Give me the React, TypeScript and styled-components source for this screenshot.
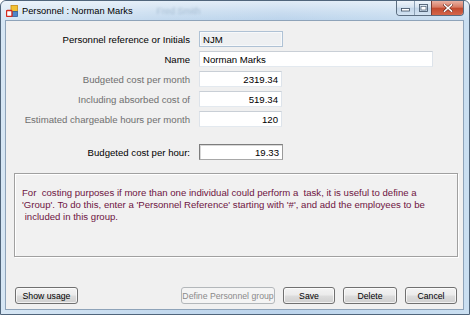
import React from "react";
import styled, { createGlobalStyle } from "styled-components";

const GlobalStyle = createGlobalStyle`
  html, body { margin: 0; padding: 0; background: #ffffff; }
  * { box-sizing: border-box; }
`;

const Window = styled.div`
  width: 470px;
  height: 315px;
  border: 1px solid #50657b;
  border-radius: 6px 6px 0 0;
  background: linear-gradient(to right, #d6e6f4 0%, #c3d9ee 35%, #bcd4ec 60%, #cadff1 100%);
  display: flex;
  flex-direction: column;
  overflow: hidden;
  font-family: "Liberation Sans", Arial, sans-serif;
`;

const TitleBar = styled.div`
  height: 19px;
  display: flex;
  align-items: center;
  padding-left: 5px;
  gap: 4px;
  background: linear-gradient(to bottom, rgba(255,255,255,0.55) 0%, rgba(255,255,255,0.2) 60%, rgba(255,255,255,0) 100%);
`;

const Title = styled.span`
  font-size: 9.3px;
  color: #000;
  white-space: nowrap;
`;

const Ghost = styled.span`
  font-size: 9px;
  color: #4d6f8f;
  opacity: 0.3;
  filter: blur(1px);
  margin-left: 20px;
  white-space: nowrap;
`;

const CaptionGroup = styled.div`
  margin-left: auto;
  margin-right: 5px;
  align-self: flex-start;
  display: flex;
  height: 15px;
  border: 1px solid #5b6d80;
  border-top: none;
  border-radius: 0 0 4px 4px;
  overflow: hidden;
`;

const CaptionButton = styled.div<{ $close?: boolean }>`
  width: ${(p) => (p.$close ? 32 : 17)}px;
  height: 100%;
  display: flex;
  align-items: center;
  justify-content: center;
  border-left: ${(p) => (p.$close ? "1px solid #7a3c33" : "1px solid #8ea2b6")};
  &:first-child { border-left: none; }
  background: ${(p) =>
    p.$close
      ? "linear-gradient(to bottom, #eab2a4 0%, #d77a63 45%, #c24a2f 50%, #d4664a 100%)"
      : "linear-gradient(to bottom, #eef4fa 0%, #d5e3f0 45%, #c2d5e8 50%, #d3e3f2 100%)"};
`;

const ClientFrame = styled.div`
  flex: 1;
  margin: 0 5px 4px 4px;
  border: 1px solid #8ea3b9;
  background: #f0f0f0;
  display: flex;
  flex-direction: column;
`;

const Form = styled.div`
  display: grid;
  grid-template-columns: 184px 1fr;
  column-gap: 9px;
  row-gap: 4px;
  padding-top: 10px;
`;

const RowGap = styled.div`
  grid-column: 1 / -1;
  height: 9px;
`;

const Label = styled.div<{ $muted?: boolean }>`
  font-size: 9.6px;
  color: ${(p) => (p.$muted ? "#6f6f6f" : "#000")};
  text-align: right;
  align-self: center;
  white-space: nowrap;
`;

const Field = styled.div<{ $width: number; $variant?: "plain" | "readonly" | "sunken"; $right?: boolean }>`
  width: ${(p) => p.$width}px;
  height: 16px;
  font-size: 9.6px;
  color: #000;
  display: flex;
  align-items: center;
  justify-content: ${(p) => (p.$right ? "flex-end" : "flex-start")};
  padding: 0 3px;
  white-space: nowrap;
  background: ${(p) => (p.$variant === "readonly" ? "#eef0f2" : "#ffffff")};
  border: 1px solid;
  border-color: ${(p) =>
    p.$variant === "readonly"
      ? "#afc2d5"
      : p.$variant === "sunken"
      ? "#7d7d7d #9a9a9a #a8a8a8 #7d7d7d"
      : "#c9cfd6 #dde3ea #e3e9ef #dde3ea"};
  box-shadow: ${(p) =>
    p.$variant === "readonly"
      ? "inset 0 0 0 1px #f7f9fb"
      : p.$variant === "sunken"
      ? "inset 1px 1px 0 #d8d8d8"
      : "none"};
`;

const InfoBox = styled.div`
  margin: 13px 5px 0 8px;
  height: 84px;
  border: 1px solid #a0a0a0;
  box-shadow: inset 1px 1px 0 #ffffff, 1px 1px 0 #ffffff;
  background: #f1f1f1;
  padding: 13px 7px 0 7px;
  font-size: 9.6px;
  line-height: 12px;
  color: #6e1442;
  white-space: pre;
`;

const ButtonBar = styled.div`
  margin-top: auto;
  display: flex;
  align-items: center;
  gap: 8px;
  padding: 0 6px 5px 9px;
`;

const Spacer = styled.div`
  flex: 1;
`;

const Button = styled.div<{ $width: number; $disabled?: boolean }>`
  width: ${(p) => p.$width}px;
  height: 17px;
  border: 1px solid ${(p) => (p.$disabled ? "#b3b7ba" : "#707070")};
  border-radius: 3px;
  display: flex;
  align-items: center;
  justify-content: center;
  font-size: 8.7px;
  color: ${(p) => (p.$disabled ? "#8a8a8a" : "#000")};
  white-space: nowrap;
  background: ${(p) =>
    p.$disabled
      ? "#f4f4f4"
      : "linear-gradient(to bottom, #f3f3f3 0%, #ebebeb 48%, #dddddd 52%, #cfcfcf 100%)"};
  box-shadow: ${(p) => (p.$disabled ? "none" : "inset 0 0 0 1px rgba(255,255,255,0.7)")};
`;

const AppIcon = () => (
  <svg width="12" height="12" viewBox="0 0 12 12">
    <rect x="5" y="0.5" width="6.5" height="6" fill="#f2c233" stroke="#c78a12" strokeWidth="0.8" />
    <rect x="6" y="6.5" width="5.5" height="5" fill="#4f86c9" stroke="#2f5e99" strokeWidth="0.8" />
    <rect x="0.5" y="5.5" width="5.5" height="6" rx="1" fill="#ffffff" stroke="#d42a1e" strokeWidth="1.4" />
  </svg>
);

const MinIcon = () => (
  <svg width="9" height="8" viewBox="0 0 9 8">
    <rect x="0.5" y="4.5" width="8" height="2.5" fill="#ffffff" stroke="#3a4c60" strokeWidth="0.8" />
  </svg>
);

const MaxIcon = () => (
  <svg width="9" height="8" viewBox="0 0 9 8">
    <rect x="0.5" y="0.5" width="8" height="7" fill="none" stroke="#3a4c60" strokeWidth="0.8" />
    <rect x="2" y="2.5" width="5" height="3.5" fill="#ffffff" stroke="#3a4c60" strokeWidth="0.6" />
  </svg>
);

const CloseIcon = () => (
  <svg width="10" height="8" viewBox="0 0 10 8">
    <path d="M1.5 0.8 L8.5 7.2 M8.5 0.8 L1.5 7.2" stroke="#5a1d12" strokeWidth="2.6" strokeLinecap="square" />
    <path d="M1.5 0.8 L8.5 7.2 M8.5 0.8 L1.5 7.2" stroke="#ffffff" strokeWidth="1.6" strokeLinecap="square" />
  </svg>
);

export default function App() {
  return (
    <>
      <GlobalStyle />
      <Window>
        <TitleBar>
          <AppIcon />
          <Title>Personnel : Norman Marks</Title>
          <Ghost>Fred Smith</Ghost>
          <CaptionGroup>
            <CaptionButton><MinIcon /></CaptionButton>
            <CaptionButton><MaxIcon /></CaptionButton>
            <CaptionButton $close><CloseIcon /></CaptionButton>
          </CaptionGroup>
        </TitleBar>
        <ClientFrame>
          <Form>
            <Label>Personnel reference or Initials</Label>
            <Field $width={84} $variant="readonly">NJM</Field>
            <Label>Name</Label>
            <Field $width={234}>Norman Marks</Field>
            <Label $muted>Budgeted cost per month</Label>
            <Field $width={83} $right>2319.34</Field>
            <Label $muted>Including absorbed cost of</Label>
            <Field $width={83} $right>519.34</Field>
            <Label $muted>Estimated chargeable hours per month</Label>
            <Field $width={83} $right>120</Field>
            <RowGap />
            <Label>Budgeted cost per hour:</Label>
            <Field $width={84} $right $variant="sunken">19.33</Field>
          </Form>
          <InfoBox>
            {"For  costing purposes if more than one individual could perform a  task, it is useful to define a\n'Group'. To do this, enter a 'Personnel Reference' starting with '#', and add the employees to be\n included in this group."}
          </InfoBox>
          <ButtonBar>
            <Button $width={63}>Show usage</Button>
            <Spacer />
            <Button $width={94} $disabled>Define Personnel group</Button>
            <Button $width={52}>Save</Button>
            <Button $width={54}>Delete</Button>
            <Button $width={52}>Cancel</Button>
          </ButtonBar>
        </ClientFrame>
      </Window>
    </>
  );
}
